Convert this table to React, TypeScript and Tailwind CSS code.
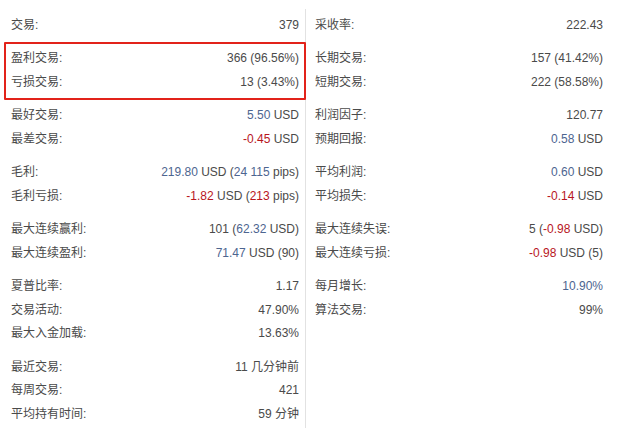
type Part = { t: string; c?: "blue" | "red" };
type Row = { label: string; value: Part[] };

const blue = "blue" as const;
const red = "red" as const;

const left: Row[][] = [
  [{ label: "交易:", value: [{ t: "379" }] }],
  [
    { label: "盈利交易:", value: [{ t: "366 (96.56%)" }] },
    { label: "亏损交易:", value: [{ t: "13 (3.43%)" }] },
  ],
  [
    { label: "最好交易:", value: [{ t: "5.50", c: blue }, { t: " USD" }] },
    { label: "最差交易:", value: [{ t: "-0.45", c: red }, { t: " USD" }] },
  ],
  [
    {
      label: "毛利:",
      value: [{ t: "219.80", c: blue }, { t: " USD (" }, { t: "24 115", c: blue }, { t: " pips)" }],
    },
    {
      label: "毛利亏损:",
      value: [{ t: "-1.82", c: red }, { t: " USD (" }, { t: "213", c: red }, { t: " pips)" }],
    },
  ],
  [
    { label: "最大连续赢利:", value: [{ t: "101 (" }, { t: "62.32", c: blue }, { t: " USD)" }] },
    { label: "最大连续盈利:", value: [{ t: "71.47", c: blue }, { t: " USD (90)" }] },
  ],
  [
    { label: "夏普比率:", value: [{ t: "1.17" }] },
    { label: "交易活动:", value: [{ t: "47.90%" }] },
    { label: "最大入金加载:", value: [{ t: "13.63%" }] },
  ],
  [
    { label: "最近交易:", value: [{ t: "11 几分钟前" }] },
    { label: "每周交易:", value: [{ t: "421" }] },
    { label: "平均持有时间:", value: [{ t: "59 分钟" }] },
  ],
];

const right: Row[][] = [
  [{ label: "采收率:", value: [{ t: "222.43" }] }],
  [
    { label: "长期交易:", value: [{ t: "157 (41.42%)" }] },
    { label: "短期交易:", value: [{ t: "222 (58.58%)" }] },
  ],
  [
    { label: "利润因子:", value: [{ t: "120.77" }] },
    { label: "预期回报:", value: [{ t: "0.58", c: blue }, { t: " USD" }] },
  ],
  [
    { label: "平均利润:", value: [{ t: "0.60", c: blue }, { t: " USD" }] },
    { label: "平均损失:", value: [{ t: "-0.14", c: red }, { t: " USD" }] },
  ],
  [
    { label: "最大连续失误:", value: [{ t: "5 (" }, { t: "-0.98", c: red }, { t: " USD)" }] },
    { label: "最大连续亏损:", value: [{ t: "-0.98", c: red }, { t: " USD (5)" }] },
  ],
  [
    { label: "每月增长:", value: [{ t: "10.90%", c: blue }] },
    { label: "算法交易:", value: [{ t: "99%" }] },
  ],
];

function Value({ parts }: { parts: Part[] }) {
  return (
    <span className="whitespace-pre">
      {parts.map((p, i) => (
        <span
          key={i}
          className={
            p.c === "blue" ? "text-[#4d6590]" : p.c === "red" ? "text-[#b8161d]" : ""
          }
        >
          {p.t}
        </span>
      ))}
    </span>
  );
}

function Column({ groups, boxed }: { groups: Row[][]; boxed?: number }) {
  return (
    <div className="flex w-[288px] flex-col gap-[10px]">
      {groups.map((g, gi) => (
        <div key={gi} className="relative flex flex-col">
          {g.map((r) => (
            <div key={r.label} className="flex h-[23.5px] items-center justify-between">
              <span>{r.label}</span>
              <Value parts={r.value} />
            </div>
          ))}
          {boxed === gi && (
            <div className="pointer-events-none absolute -top-[5px] -bottom-[6px] -left-[7px] -right-[7px] rounded-[1px] border-[2.5px] border-[#e2231a]" />
          )}
        </div>
      ))}
    </div>
  );
}

export default function App() {
  return (
    <div
      className="h-[438px] w-[618px] bg-white pl-[11px] pt-[13px] text-[12px] text-[#4a4a4a]"
      style={{ fontFamily: '"Liberation Sans", "Noto Sans CJK SC", sans-serif' }}
    >
      <div className="flex">
        <Column groups={left} boxed={1} />
        <div className="ml-[6px] mr-[9px] -mt-[4px] h-[419px] w-px bg-[#e2e2e2]" />
        <Column groups={right} />
      </div>
    </div>
  );
}
